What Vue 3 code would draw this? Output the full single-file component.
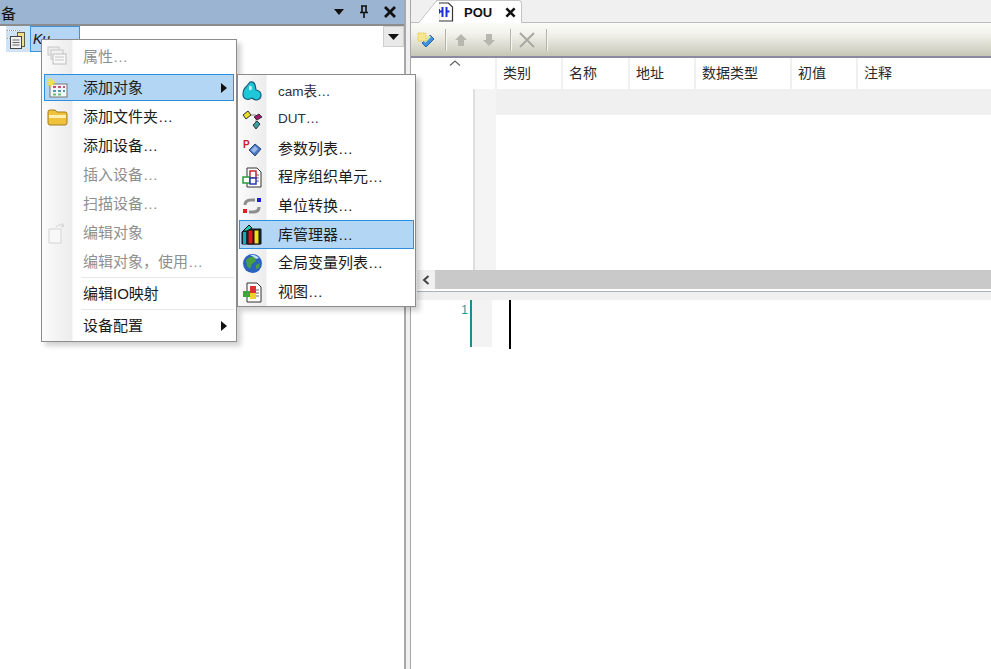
<template>
  <div class="app">
    <section class="left-pane">
      <header class="pane-title">
        <span class="pane-name">备</span>
        <div class="pane-tools">
          <svg width="12" height="12" viewBox="0 0 12 12"><path d="M1 3h10L6 9z" fill="#111" /></svg>
          <svg width="12" height="14" viewBox="0 0 12 14"><path d="M3 1h6M4 1v6M8 1v6M2 7.500h8M6 8v5" stroke="#111" stroke-width="1.600" fill="none" /></svg>
          <svg width="14" height="14" viewBox="0 0 14 14"><path d="M2 2l10 10M12 2L2 12" stroke="#111" stroke-width="2.800" /></svg>
        </div>
      </header>
      <div class="tree">
        <div class="tree-row">
          <span class="tree-icon">
            <svg width="24" height="24" viewBox="0 0 24 24">
              <path d="M1 3.500h13M1 3.500v8M1 11.500h4" stroke="#fff" fill="none" />
              <path d="M1 3.500h13M1 3.500v8M1 11.500h4" stroke="#999" stroke-dasharray="1 1" fill="none" />
              <rect x="11.500" y="5.500" width="7" height="14" fill="#f3df86" stroke="#5f5f48" />
              <rect x="4.500" y="9.500" width="11" height="12" fill="#f2f2f2" stroke="#444" />
              <path d="M6.500 13h7M6.500 15.500h7M6.500 18h7" stroke="#666" />
            </svg>
          </span>
          <span class="tree-label">Ku</span>
        </div>
        <button class="combo-btn">
          <svg width="11" height="6" viewBox="0 0 11 6"><path d="M0 0h11L5.500 6z" fill="#111" /></svg>
        </button>
      </div>
    </section>

    <div class="splitter"></div>

    <section class="right-pane">
      <div class="tab-strip">
        <div class="tab">
          <svg class="tab-edge" width="20" height="23" viewBox="0 0 20 23"><path d="M0 22.500L17 1.500Q18 .5 20 .5V23H0z" fill="#fff" /><path d="M0 22.500L17 1.500Q18 .5 20 .5" fill="none" stroke="#c4c4c4" /></svg>
          <svg class="tab-doc" width="17" height="20" viewBox="0 0 17 20">
            <path d="M1.500 1h10l4 4v14h-14z" fill="#fff" stroke="#333" stroke-width="1.200" />
            <path d="M2 7v4.500M5.500 5v10M9.500 5v10M2.500 9.500h3M9.500 9.500h3" stroke="#1a2ee0" stroke-width="2" fill="none" />
          </svg>
          <span class="tab-name">POU</span>
          <svg class="tab-close" width="11" height="11" viewBox="0 0 12 12"><path d="M1.500 1.500l9 9M10.500 1.500l-9 9" stroke="#111" stroke-width="2.800" /></svg>
        </div>
      </div>

      <div class="toolbar">
        <svg width="18" height="18" viewBox="0 0 18 18">
          <path d="M5 12l8-8 4 4-8 8z" fill="#3f93dc" stroke="#27609e" />
          <path d="M7 9l5-5 2 2-6 6z" fill="#d7e9b0" />
          <rect x="1" y="2" width="8" height="8" fill="#f8e68c" stroke="#e3c64c" stroke-dasharray="1.500 1" />
        </svg>
        <i class="tool-sep sep-a"></i>
        <svg width="14" height="14" viewBox="0 0 14 14"><path d="M7 1l6 6H10v6H4V7H1z" fill="#b7b7b0" /></svg>
        <svg class="tool-down" width="14" height="14" viewBox="0 0 14 14"><path d="M7 13l6-6H10V1H4v6H1z" fill="#b7b7b0" /></svg>
        <i class="tool-sep sep-b"></i>
        <svg width="16" height="16" viewBox="0 0 16 16"><path d="M1 1l14 14M15 1L1 15" stroke="#a9a9a3" stroke-width="2" /></svg>
        <i class="tool-sep sep-c"></i>
      </div>

      <div class="decl-head">
        <div class="sort-col">
          <svg width="12" height="6" viewBox="0 0 12 6"><path d="M1 5.500L6 1l5 4.500" fill="none" stroke="#666" stroke-width="1.300" /></svg>
        </div>
        <div v-for="col in columns" :key="col.name" class="head-cell" :style="{ width: col.width + 'px' }">{{ col.name }}</div>
      </div>
      <div class="decl-body">
        <div class="decl-gutter"></div>
        <div class="decl-rows">
          <div class="decl-band"></div>
        </div>
      </div>

      <div class="hscroll">
        <div class="scroll-arrow">
          <svg width="8" height="10" viewBox="0 0 8 10"><path d="M6.500 1L2 5l4.500 4" fill="none" stroke="#444" stroke-width="2" /></svg>
        </div>
        <div class="scroll-thumb"></div>
      </div>
      <div class="pane-gap"></div>

      <div class="editor">
        <div class="line-no">1</div>
        <div class="line-mark"></div>
        <div class="line-fold"></div>
        <div class="caret"></div>
      </div>
    </section>

    <!-- context menu -->
    <ul class="menu main-menu">
      <template v-for="item in mainItems" :key="item.label">
        <li v-if="item.sep" class="menu-sep"></li>
        <li class="menu-item" :class="{ off: item.off, active: item.active, first: item.first }">
          <span class="menu-icon">
            <svg v-if="item.icon === 'props'" width="20" height="20" viewBox="0 0 20 20">
              <rect x="1" y="1" width="11" height="8" fill="#eee" stroke="#c6c6c6" />
              <rect x="4" y="4" width="12" height="9" fill="#f2f2f2" stroke="#c6c6c6" />
              <rect x="6" y="8" width="13" height="10" fill="#f8f8f8" stroke="#bdbdbd" />
              <path d="M8 11h9M8 14h9" stroke="#c6c6c6" />
            </svg>
            <svg v-else-if="item.icon === 'add'" width="22" height="20" viewBox="0 0 22 20">
              <rect x="4" y="6" width="17" height="13" fill="#f6f6f6" stroke="#777" />
              <path d="M7 9h3M12 9h3M17 9h2" stroke="#d04a7a" stroke-width="2" />
              <path d="M7 13h3M12 13h3M17 13h2" stroke="#4a9ac0" stroke-width="2" />
              <path d="M7 16.500h3M12 16.500h3" stroke="#6fbf73" stroke-width="2" />
              <path d="M5 0v9M0.500 4.500h9M2 1.500l6 6M8 1.500l-6 6" stroke="#f2e24a" stroke-width="1.300" />
            </svg>
            <svg v-else-if="item.icon === 'folder'" width="21" height="18" viewBox="0 0 21 18">
              <path d="M1 4q0-2 2-2h5l2 2h8q2 0 2 2v9q0 2-2 2H3q-2 0-2-2z" fill="#f0c23c" stroke="#a67c1c" />
              <path d="M2 7h17v3H2z" fill="#fdf0b0" />
            </svg>
            <svg v-else-if="item.icon === 'edit'" width="20" height="22" viewBox="0 0 20 22">
              <path d="M2 7h12v14H2z" fill="#f8f8f8" stroke="#d4d4d4" />
              <path d="M9 5q4-4 8-1M15 1l2 3-3 1" fill="none" stroke="#d4d4d4" />
            </svg>
          </span>
          <span class="menu-text">{{ item.label }}</span>
          <svg v-if="item.sub" class="menu-arrow" width="6" height="10" viewBox="0 0 6 10"><path d="M0 0l6 5-6 5z" fill="#111" /></svg>
        </li>
      </template>
    </ul>

    <!-- 添加对象 submenu -->
    <ul class="menu sub-menu">
      <li v-for="item in subItems" :key="item.label" class="sub-item" :class="{ active: item.active }">
        <span class="menu-icon">
          <svg v-if="item.icon === 'cam'" width="20" height="20" viewBox="0 0 20 20">
            <path d="M8 1q4-1 5 3t1 5q5 1 5 5t-4 5q-3 0-5-2-3 2-6 1T1 13q0-4 2-6t5-6z" fill="#1fc8d8" stroke="#1a5a78" stroke-width="1.200" />
            <path d="M7 5q3-1 3 2T7 9z" fill="#b8f2f5" />
          </svg>
          <svg v-else-if="item.icon === 'dut'" width="21" height="20" viewBox="0 0 21 20">
            <path d="M7 5h7v4M14 9v3" fill="none" stroke="#8b8b8b" />
            <path d="M1 5l5-4 3 4-5 4z" fill="#e8dc2c" stroke="#333" />
            <path d="M12 7l5-3 3 3-5 3z" fill="#a01a70" stroke="#333" />
            <path d="M11 15l4-4 3 3-4 5z" fill="#3b9ea0" stroke="#333" />
          </svg>
          <svg v-else-if="item.icon === 'param'" width="20" height="20" viewBox="0 0 20 20">
            <text x="1" y="9" class="param-p">P</text>
            <path d="M7 11l6-6 6 5-6 7z" fill="#4a76c4" stroke="#2b4a80" />
            <path d="M9 11l4-4 3 3-4 4z" fill="#9ab8e8" />
          </svg>
          <svg v-else-if="item.icon === 'pou' || item.icon === 'view'" width="20" height="21" viewBox="0 0 20 21">
            <path d="M5 1h10l4 4v15H5z" fill="#fff" stroke="#333" />
            <path d="M14 8h3M14 11h3M14 14h3" stroke="#666" />
            <template v-if="item.icon === 'pou'">
              <rect x="8" y="4" width="6" height="7" fill="#fff" stroke="#c02828" stroke-width="1.500" />
              <rect x="1" y="10" width="7" height="6" fill="#fff" stroke="#2a9a3a" stroke-width="1.500" />
              <rect x="8" y="11" width="6" height="6" fill="#fff" stroke="#2838b0" stroke-width="1.500" />
            </template>
            <template v-else>
              <rect x="8" y="4" width="6" height="7" fill="#e03030" />
              <rect x="1" y="9" width="7" height="6" fill="#38a838" />
              <rect x="8" y="11" width="6" height="6" fill="#f0d020" />
            </template>
          </svg>
          <svg v-else-if="item.icon === 'unit'" width="20" height="18" viewBox="0 0 20 18">
            <path d="M3 8q0-5 6-5h4M17 10q0 5-6 5H7" fill="none" stroke="#8e8e8e" stroke-width="3" />
            <rect x="15" y="1" width="4" height="4" fill="#1a1ae0" />
            <rect x="1" y="12" width="4" height="4" fill="#e02020" />
          </svg>
          <svg v-else-if="item.icon === 'lib'" width="22" height="21" viewBox="0 0 22 21">
            <path d="M1 8l3-3h16v15H1z" fill="#0b3a44" stroke="#111" />
            <rect x="2" y="8" width="3" height="12" fill="#18a8b8" />
            <rect x="7" y="6" width="5" height="14" fill="#e01818" stroke="#111" />
            <rect x="13" y="6" width="5" height="14" fill="#f0e020" stroke="#111" />
            <path d="M2 7l6-6 3 3-5 3z" fill="#20c8a8" stroke="#111" />
          </svg>
          <svg v-else-if="item.icon === 'globe'" width="21" height="21" viewBox="0 0 21 21">
            <circle cx="10.500" cy="10.500" r="9.500" fill="#2a62c0" />
            <path d="M4 7q4-4 8-3l2 4-4 3-2 5-3-3zM14 12l4-2-1 5-3 1z" fill="#4aa040" />
            <path d="M8 2q5-1 9 3l-3 1q-3-3-6-4z" fill="#c0e0f8" />
          </svg>
        </span>
        <span class="sub-text" :class="{ latin: item.latin }">{{ item.label }}</span>
      </li>
    </ul>
  </div>
</template>

<script setup>
const columns = [
  { name: "类别", width: 66 },
  { name: "名称", width: 67 },
  { name: "地址", width: 66 },
  { name: "数据类型", width: 96 },
  { name: "初值", width: 66 },
  { name: "注释", width: 135 },
];

const mainItems = [
  { label: "属性…", off: true, icon: "props", first: true },
  { label: "添加对象", active: true, icon: "add", sub: true },
  { label: "添加文件夹…", icon: "folder" },
  { label: "添加设备…" },
  { label: "插入设备…", off: true },
  { label: "扫描设备…", off: true },
  { label: "编辑对象", off: true, icon: "edit" },
  { label: "编辑对象\uFF0C使用…", off: true },
  { label: "编辑IO映射", sep: true },
  { label: "设备配置", sub: true, sep: true },
];

const subItems = [
  { label: "cam表…", icon: "cam", latin: true },
  { label: "DUT…", icon: "dut", latin: true },
  { label: "参数列表…", icon: "param" },
  { label: "程序组织单元…", icon: "pou" },
  { label: "单位转换…", icon: "unit" },
  { label: "库管理器…", icon: "lib", active: true },
  { label: "全局变量列表…", icon: "globe" },
  { label: "视图…", icon: "view" },
];
</script>

<style>
html,
body {
  margin: 0;
  background: #fff;
}
</style>

<style scoped>
.app {
  position: relative;
  display: flex;
  width: 991px;
  height: 669px;
  overflow: hidden;
  font-family: "Liberation Sans", "Noto Sans CJK SC", sans-serif;
  font-size: 14px;
  color: #1c1c1c;
  background: #fff;
}

/* left pane */
.left-pane {
  width: 404px;
  flex: none;
}
.pane-title {
  height: 24px;
  display: flex;
  align-items: center;
  justify-content: space-between;
  background: #9bb4d2;
  border-bottom: 2px solid #8c8c8c;
  overflow: hidden;
}
.pane-name {
  margin-left: 1px;
  font-size: 15px;
  color: #111;
}
.pane-tools {
  display: flex;
  align-items: center;
  gap: 13px;
  padding-right: 7px;
}
.tree {
  display: flex;
  justify-content: space-between;
}
.tree-row {
  display: flex;
  height: 26px;
  padding-left: 6px;
}
.tree-icon {
  width: 24px;
  background: #cfe3f6;
  display: flex;
  align-items: center;
  justify-content: center;
}
.tree-label {
  width: 46px;
  background: #b4d5f3;
  border: 1px solid #3c93dc;
  font-style: italic;
  font-size: 14px;
  line-height: 24px;
  padding-left: 2px;
  color: #111;
}
.combo-btn {
  width: 21px;
  height: 21px;
  margin-top: 0;
  padding: 0;
  border: 1px solid #cfcfcf;
  background: #e9e9e9;
  display: flex;
  align-items: center;
  justify-content: center;
}

.splitter {
  width: 4px;
  flex: none;
  background: #f0f0f0;
  border-left: 2px solid #a8a8a8;
  border-right: 1px solid #a8a8a8;
}

/* right pane */
.right-pane {
  flex: 1;
  min-width: 0;
  display: flex;
  flex-direction: column;
}
.tab-strip {
  height: 22px;
  background: #f0f0f0;
  border-bottom: 1px solid #bdbdbd;
  padding-left: 8px;
  flex: none;
}
.tab {
  position: relative;
  width: 86px;
  height: 23px;
  margin-left: 17px;
  background: #fff;
  border-top: 1px solid #c4c4c4;
  border-right: 1px solid #c4c4c4;
  border-radius: 0 4px 0 0;
  box-sizing: border-box;
  display: flex;
  align-items: center;
}
.tab-edge {
  position: absolute;
  left: -17px;
  top: -1px;
}
.tab-doc {
  margin-left: 1px;
  flex: none;
}
.tab-name {
  margin-left: 10px;
  font-weight: 700;
  font-size: 13px;
  color: #111;
}
.tab-close {
  margin-left: 13px;
}
.toolbar {
  height: 33px;
  flex: none;
  display: flex;
  align-items: center;
  padding-left: 6px;
  gap: 7px;
  background: linear-gradient(#fafaf6, #f4f4ee 30%, #c7c7b7);
  border-bottom: 2px solid #8a8aa0;
}
.tool-sep {
  width: 1px;
  height: 22px;
  background: #b4b4a8;
  border-right: 1px solid #f6f6f0;
}
.sep-a {
  margin-left: 3px;
}
.tool-down {
  margin-left: 7px;
}
.sep-b {
  margin-left: 7px;
}
.sep-c {
  margin-left: 4px;
}
.decl-head {
  height: 31px;
  flex: none;
  display: flex;
}
.sort-col {
  width: 84px;
  box-sizing: border-box;
  display: flex;
  justify-content: center;
  padding: 2px 0 0 4px;
  align-items: flex-start;
}
.head-cell {
  box-sizing: border-box;
  border-left: 2px solid #f0f0f0;
  padding: 4px 0 0 6px;
  color: #2a2a2a;
}
.decl-body {
  height: 181px;
  flex: none;
  display: flex;
}
.decl-gutter {
  width: 21px;
  flex: none;
  margin-left: 62px;
  background: #f4f4f4;
  border-left: 2px solid #dedede;
}
.decl-rows {
  flex: 1;
}
.decl-band {
  height: 26px;
  background: #f0f0f0;
}
.hscroll {
  height: 19px;
  flex: none;
  display: flex;
  margin-left: 6px;
  background: #f0f0f0;
}
.scroll-arrow {
  width: 18px;
  display: flex;
  align-items: center;
  justify-content: center;
}
.scroll-thumb {
  flex: 1;
  background: #c9c9c9;
}
.pane-gap {
  height: 8px;
  flex: none;
  margin: 2px 0 0 6px;
  background: #f0f0f0;
  border-top: 1px solid #a9b1bb;
}
.editor {
  display: flex;
  height: 49px;
  flex: none;
}
.line-no {
  width: 59px;
  text-align: right;
  font-size: 12px;
  color: #1a9a9a;
  padding-right: 2px;
  box-sizing: border-box;
  line-height: 21px;
}
.line-mark {
  width: 2px;
  height: 47px;
  background: #178f8f;
}
.line-fold {
  width: 20px;
  height: 47px;
  background: #f3f3f3;
}
.caret {
  width: 2px;
  background: #000;
  margin-left: 17px;
}

/* menus */
.menu {
  position: absolute;
  margin: 0;
  padding: 0;
  list-style: none;
  box-sizing: border-box;
  background: #fff;
  border: 1px solid #8c8c8c;
  box-shadow: 4px 4px 5px rgba(0, 0, 0, 0.18);
}
.main-menu {
  left: 41px;
  top: 39px;
  width: 196px;
  height: 303px;
  padding: 3px 2px 0;
  background: linear-gradient(90deg, #fbfbfb, #ececec 30px, #fff 31px);
}
.sub-menu {
  left: 237px;
  top: 74px;
  width: 179px;
  height: 233px;
  padding: 2px 1px 0;
  background: linear-gradient(90deg, #fbfbfb, #ececec 28px, #fff 29px);
}
.menu-item {
  position: relative;
  display: flex;
  align-items: center;
  height: 29px;
  box-sizing: border-box;
  font-size: 15px;
}
.menu-item.first {
  height: 26px;
  margin-bottom: 5px;
}
.menu-item.active {
  height: 27px;
  margin-bottom: 1px;
}
.menu-item.off {
  color: #8f8f8f;
}
.menu-item.active,
.sub-item.active {
  background: #b3d6f4;
  box-shadow: inset 0 0 0 1px #2f8fdc;
}
.menu-icon {
  width: 26px;
  margin-right: 13px;
  flex: none;
  display: flex;
  align-items: center;
  justify-content: center;
}
.menu-text {
  white-space: nowrap;
  margin-top: -2px;
}
.menu-arrow {
  position: absolute;
  right: 7px;
}
.menu-sep {
  height: 1px;
  margin: 1px 0 1px 37px;
  background: #e8e8e8;
}
.sub-item {
  display: flex;
  align-items: center;
  height: 28.7px;
  box-sizing: border-box;
  font-size: 15px;
}
.sub-text {
  white-space: nowrap;
  margin-top: -3px;
}
.sub-text.latin {
  font-size: 13.5px;
  color: #303040;
}
.param-p {
  font-size: 10px;
  font-weight: 700;
  fill: #d02020;
}
</style>
